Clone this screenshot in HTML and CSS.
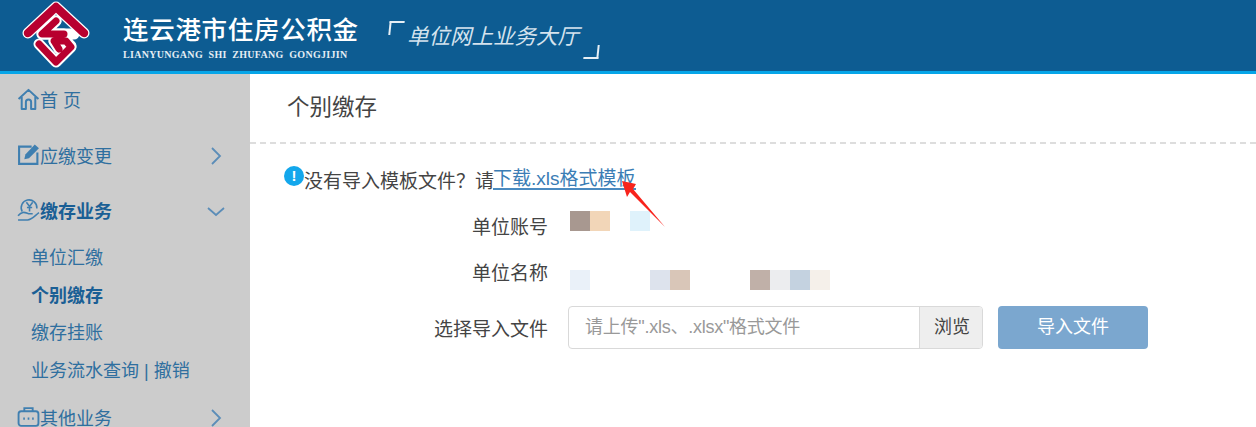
FILE: index.html
```html
<!DOCTYPE html>
<html lang="zh-CN">
<head>
  <meta charset="UTF-8">
  <title>单位网上业务大厅</title>
  <link rel="stylesheet" href="styles.css">
</head>
<body>

  <div class="header">
    <svg class="logo" width="74" height="70" viewBox="0 0 74 70" fill="none" stroke-linecap="round" stroke-linejoin="round">
      <path d="M10 33 L38 7 L66 33 M38 21 L24 34 H46 M21 44 L38 62 L53 47 L48 41 H36 L41 49" stroke="#fff" stroke-width="11"/>
      <path d="M38 21 L24 34 H44 L56 34 M36 41 H48 L53 46" stroke="#fff" stroke-width="11"/>
      <path d="M10 33 L38 7 L66 33" stroke="#b8002f" stroke-width="8.5"/>
      <path d="M38 21 L24 34 H46 M21 44 L38 62 L53 47 L48 41 H36 L41 49" stroke="#b8002f" stroke-width="7"/>
    </svg>
    <div class="brand">
      <div class="brand_cn">连云港市住房公积金</div>
      <div class="brand_en">LIANYUNGANG&nbsp; SHI&nbsp; ZHUFANG&nbsp; GONGJIJIN</div>
    </div>
    <div class="hall">
      <span class="corner corner_tl"></span>
      <span class="hall_text">单位网上业务大厅</span>
      <span class="corner corner_br"></span>
    </div>
  </div>

  <div class="main">
    <div class="side">
      <div class="menu_item menu_first">
        <svg class="menu_icon" viewBox="0 0 22 22" fill="none" stroke="#3f7fb0" stroke-width="1.9" stroke-linejoin="round">
          <path d="M1.5 10.5 L11 1.8 L20.5 10.5 M4.5 8.5 V20 H8.5 V13.5 A2.5 2.5 0 0 1 13.5 13.5 V20 H17.5 V8.5"/>
        </svg>
        <span>首 页</span>
      </div>
      <div class="menu_item">
        <svg class="menu_icon" viewBox="0 0 22 22" fill="none" stroke="#3f7fb0" stroke-width="2">
          <path d="M14 3.5 H2 V20 H19.5 V9"/>
          <path d="M7 15.5 L8 11 L17 1.5 L21 5 L11.5 14.5 Z" fill="#3f7fb0" stroke="none"/>
        </svg>
        <span>应缴变更</span>
        <svg class="arrow" width="12" height="18" viewBox="0 0 12 18" fill="none" stroke="#5b8db8" stroke-width="1.8"><path d="M2 1 L10 9 L2 17"/></svg>
      </div>
      <div class="menu_item menu_open">
        <svg class="menu_icon" viewBox="0 0 22 22" fill="none" stroke="#3f7fb0" stroke-width="1.5">
          <path d="M5 13 A7.5 7.5 0 1 1 19 10"/>
          <path d="M9 4 L12 8 L15 4 M12 8 V13 M9.5 9 H14.5"/>
          <path d="M1 17 C5 12 8 14 11 15 H15 M1 21 H10 C14 21 17 17 21 14"/>
        </svg>
        <span>缴存业务</span>
        <svg class="arrow arrow_down" width="18" height="10" viewBox="0 0 18 10" fill="none" stroke="#5b8db8" stroke-width="1.8"><path d="M1 1 L9 8 L17 1"/></svg>
      </div>
      <div class="sub_menu">
        <div class="sub_item">单位汇缴</div>
        <div class="sub_item sub_active">个别缴存</div>
        <div class="sub_item">缴存挂账</div>
        <div class="sub_item">业务流水查询 | 撤销</div>
      </div>
      <div class="menu_item">
        <svg class="menu_icon" viewBox="0 0 22 22" fill="none" stroke="#3f7fb0" stroke-width="1.8">
          <rect x="1.5" y="6" width="19" height="14" rx="2.5"/>
          <path d="M7 6 V3 H15 V6"/>
          <path d="M6 13 H7.5 M10.2 13 H11.8 M14.5 13 H16" stroke-width="2"/>
        </svg>
        <span>其他业务</span>
        <svg class="arrow" width="12" height="18" viewBox="0 0 12 18" fill="none" stroke="#5b8db8" stroke-width="1.8"><path d="M2 1 L10 9 L2 17"/></svg>
      </div>
    </div>

    <div class="content">
      <div class="page_title">个别缴存</div>
      <div class="notice">
        <span class="notice_icon">!</span>没有导入模板文件？请<a class="notice_link" href="#">下载.xls格式模板</a>
        <svg class="pointer" width="45" height="50" viewBox="0 0 45 50">
          <path d="M0 2 L14 5 L11 10 L43 48 L8 13 L5 18 Z" fill="#f8231c"/>
        </svg>
      </div>
      <div class="form_row form_row_account">
        <div class="form_label">单位账号</div>
        <div class="mosaic">
          <i style="background:#a89890"></i><i style="background:#f2d6b8"></i><i></i><i style="background:#dff2fb"></i>
        </div>
      </div>
      <div class="form_row form_row_name">
        <div class="form_label">单位名称</div>
        <div class="mosaic mosaic_low">
          <i style="background:#eaf1f9"></i><i></i><i></i><i></i><i style="background:#dde3ed"></i><i style="background:#d9c6b8"></i><i></i><i></i><i></i>
          <i style="background:#c0b0a8"></i><i style="background:#ecedef"></i><i style="background:#c4d2e0"></i><i style="background:#f5f0ea"></i>
        </div>
      </div>
      <div class="form_row form_row_file">
        <div class="form_label">选择导入文件</div>
        <div class="file_box">
          <div class="file_hint">请上传".xls、.xlsx"格式文件</div>
          <div class="file_btn">浏览</div>
        </div>
        <div class="import_btn">导入文件</div>
      </div>
    </div>
  </div>

</body>
</html>
```

FILE: styles.css
```css
html, body {
  height: 100%;
}
body {
  margin: 0;
  overflow: hidden;
  background: #fff;
  color: #444;
  font-family: "Liberation Sans", "Noto Sans CJK SC", sans-serif;
  font-size: 19px;
}
.header {
  height: 71px;
  background: #0d5c92;
  border-top: 1px solid #2f7299;
  border-bottom: 3px solid #06a5e8;
  margin-top: -1px;
  display: flex;
  align-items: flex-start;
}
.logo {
  margin-left: 18px;
  flex: none;
}
.brand {
  width: 237px;
  margin: 11px 0 0 31px;
  color: #fff;
}
.brand_cn {
  font-family: "Noto Sans CJK SC", serif;
  font-size: 25.5px;
  line-height: 34px;
  letter-spacing: 0.7px;
  font-weight: 500;
  white-space: nowrap;
}
.brand_en {
  font-family: "Liberation Serif", serif;
  font-size: 10px;
  font-weight: bold;
  line-height: 14px;
  margin-top: 3px;
  letter-spacing: 0.3px;
  color: #e4edf4;
  white-space: nowrap;
}
.hall {
  position: relative;
  width: 192px;
  height: 38px;
  margin: 21px 0 0 29px;
  padding-left: 18px;
  color: #d5e3ee;
  font-size: 21.5px;
  line-height: 30px;
  font-style: italic;
}
.hall_text {
  display: block;
  margin-top: 1px;
  white-space: nowrap;
}
.corner {
  position: absolute;
  width: 13px;
  height: 12px;
  border: solid #e6eff5;
  border-width: 0;
}
.corner_tl {
  left: 0;
  top: 0;
  border-top-width: 2px;
  border-left-width: 2px;
  transform: skewX(-6deg);
}
.corner_br {
  right: 0;
  bottom: 0;
  border-bottom-width: 2px;
  border-right-width: 2px;
  transform: skewX(-6deg);
}
.main {
  display: flex;
  height: 353px;
}
.side {
  width: 250px;
  flex: none;
  background: #cccccc;
  overflow: hidden;
  color: #2f6f9f;
  font-size: 18px;
}
.menu_item {
  height: 55px;
  display: flex;
  align-items: center;
  padding-left: 17px;
  position: relative;
}
.menu_first {
  height: 56px;
  margin-top: -3px;
}
.menu_icon {
  width: 23px;
  height: 23px;
  flex: none;
}
.menu_open {
  font-weight: bold;
  color: #1a5f95;
}
.arrow {
  position: absolute;
  right: 28px;
  top: 20px;
}
.arrow_down {
  right: 25px;
  top: 25px;
}
.sub_menu {
  padding-left: 31px;
  margin: 3px 0 -1px;
}
.sub_item {
  height: 37.5px;
  line-height: 37.5px;
  white-space: nowrap;
}
.sub_active {
  font-weight: bold;
  color: #1a5f95;
}
.content {
  flex: 1;
}
.page_title {
  height: 70px;
  line-height: 68px;
  padding-left: 37px;
  font-size: 22.5px;
  border-bottom: 2px dashed #dddddd;
  box-sizing: border-box;
}
.notice {
  position: relative;
  margin: 20px 0 0 34px;
  height: 30px;
  display: flex;
  align-items: center;
  white-space: nowrap;
}
.notice_icon {
  width: 20px;
  height: 20px;
  margin-top: -6px;
  border-radius: 50%;
  background: #13a7ec;
  color: #fff;
  font-size: 15px;
  font-weight: bold;
  line-height: 20px;
  text-align: center;
  flex: none;
}
.notice_link {
  margin-left: -1px;
  color: #3b7db5;
  border-bottom: 2px solid #4a8ac0;
  line-height: 19px;
  text-decoration: none;
}
.pointer {
  position: absolute;
  left: 338px;
  top: 15px;
}
.form_row {
  display: flex;
  align-items: center;
}
.form_row_account {
  margin-top: 9px;
  height: 44px;
}
.form_row_name {
  margin-top: -2px;
  height: 52px;
}
.form_row_file {
  margin-top: 9px;
  height: 43px;
}
.form_label {
  width: 298px;
  text-align: right;
  flex: none;
}
.mosaic {
  display: flex;
  margin: -8px 0 0 22px;
}
.mosaic_low {
  margin-top: 18px;
}
.mosaic i {
  display: block;
  width: 20px;
  height: 20px;
}
.file_box {
  display: flex;
  width: 415px;
  height: 43px;
  margin-left: 20px;
  border: 1px solid #d9d9d9;
  border-radius: 4px;
  box-sizing: border-box;
  overflow: hidden;
  font-size: 18px;
}
.file_hint {
  flex: 1;
  padding-left: 16px;
  line-height: 41px;
  color: #999;
  letter-spacing: -0.25px;
  white-space: nowrap;
}
.file_btn {
  width: 60px;
  padding-left: 2px;
  text-align: center;
  line-height: 41px;
  background: #eeeeee;
  border-left: 1px solid #d9d9d9;
}
.import_btn {
  width: 150px;
  height: 43px;
  margin-left: 15px;
  line-height: 43px;
  text-align: center;
  font-size: 18px;
  color: #fff;
  background: #7ba7cf;
  border-radius: 4px;
}
```
